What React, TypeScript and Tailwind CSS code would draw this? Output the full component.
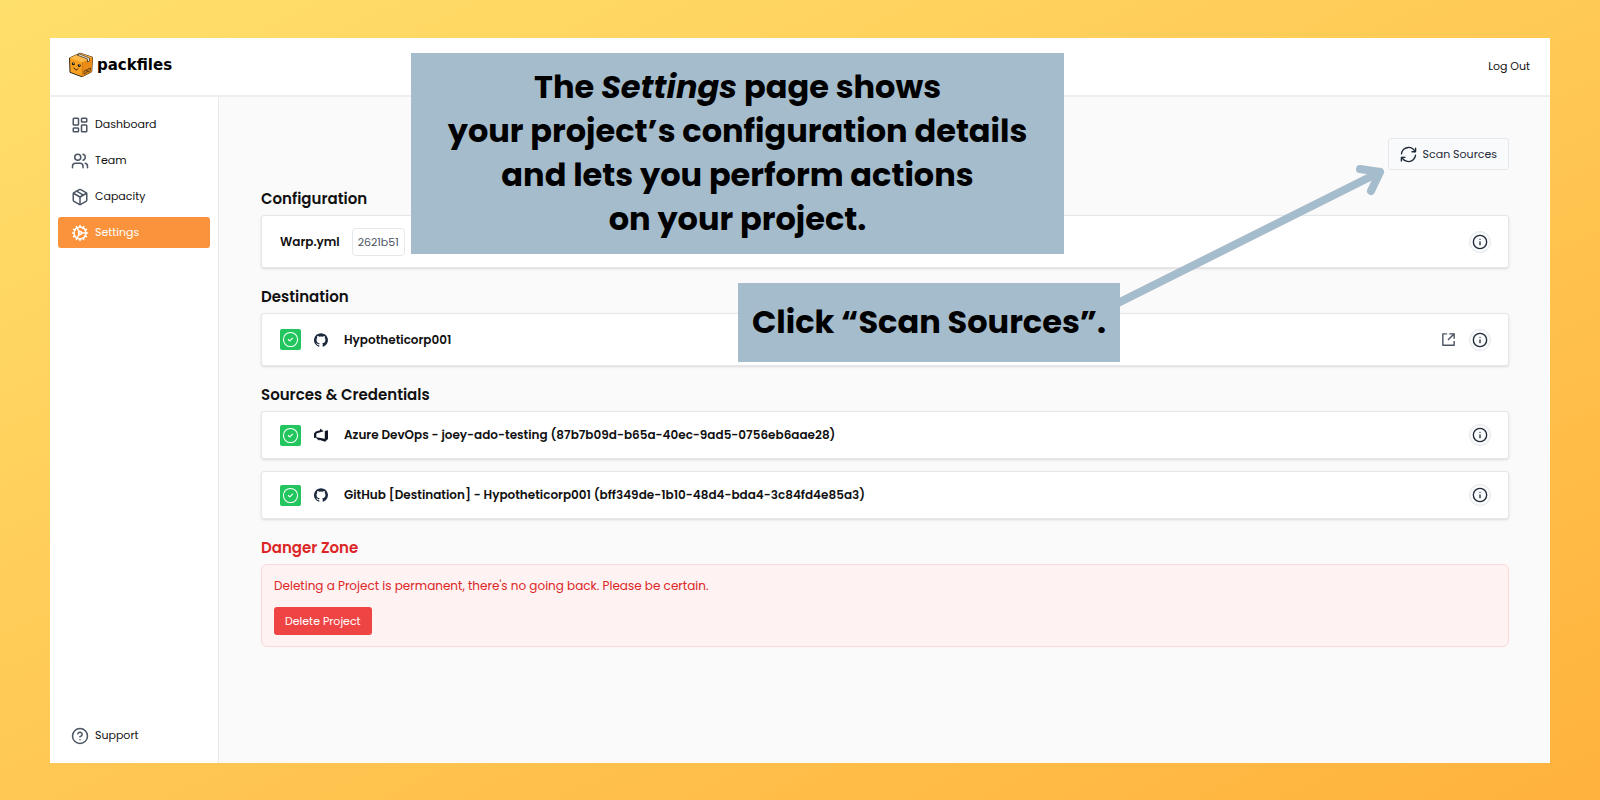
import type { ReactNode } from "react";
import { Info, LayoutDashboard, Users, Package, Cog, CircleHelp, CircleCheck } from "lucide-react";
import { RiShareBoxLine } from "react-icons/ri";

function BoxLogo() {
  return (
    <svg viewBox="0 0 26 26" className="size-[26px]" aria-hidden="true">
      <path d="M1.500 6 12 1.200l12.500 4-.8 14.600L14 24.800 2 20.300z" fill="#f8a01f" stroke="#3a2a18" strokeWidth="1" strokeLinejoin="round" />
      <path d="M1.500 6 12 1.200l12.500 4-10 5z" fill="#fdb94a" />
      <path d="m14.500 10.200 10-5-.8 14.600-9.700 5z" fill="#ea8c16" />
      <path d="m14.500 10.200-.5 14.600" stroke="#b86a10" strokeWidth=".6" />
      <path d="m9 3 10.500 4v3l2-1V6L11.500 2z" fill="#e9e4dc" stroke="#3a2a18" strokeWidth=".7" strokeLinejoin="round" />
      <circle cx="5.300" cy="11.800" r="1.500" fill="#1c1410" />
      <circle cx="11.200" cy="13.600" r="1.500" fill="#1c1410" />
      <circle cx="5.700" cy="11.300" r=".5" fill="#fff" />
      <circle cx="11.600" cy="13.100" r=".5" fill="#fff" />
      <path d="M6 16c.5 2 3 2.600 3.800.9" fill="none" stroke="#1c1410" strokeWidth="1" strokeLinecap="round" />
      <path d="m16 19 2.600-1.300v3L16 22zM19.800 17.200l2.500-1.200v2.800l-2.500 1.300z" fill="none" stroke="#3a2a18" strokeWidth=".7" />
    </svg>
  );
}

function GithubMark() {
  return (
    <svg viewBox="0 0 24 24" className="size-[14px] text-slate-800" fill="currentColor" aria-hidden="true">
      <path d="M12 .3a12 12 0 0 0-3.800 23.380c.6.120.830-.26.830-.570L9 21.070c-3.340.720-4.040-1.610-4.040-1.610-.550-1.390-1.340-1.760-1.340-1.760-1.080-.740.090-.730.090-.730 1.200.090 1.830 1.240 1.830 1.240 1.080 1.830 2.810 1.300 3.500 1 .1-.780.420-1.310.760-1.610-2.670-.3-5.470-1.330-5.470-5.930 0-1.310.470-2.380 1.240-3.220-.140-.3-.540-1.520.1-3.180 0 0 1.010-.320 3.300 1.230a11.500 11.500 0 0 1 6 0c2.280-1.550 3.290-1.230 3.290-1.230.640 1.660.240 2.880.120 3.180a4.650 4.650 0 0 1 1.230 3.220c0 4.610-2.800 5.630-5.480 5.920.420.360.810 1.100.810 2.220l-.010 3.290c0 .310.2.690.820.570A12 12 0 0 0 12 .3" />
    </svg>
  );
}

function AzureDevOpsMark() {
  return (
    <svg viewBox="0 0 24 24" className="size-[14px] text-gray-900" fill="currentColor" aria-hidden="true">
      <path d="M0 9.500 3 6l7.500-2V1l6 4.500L4 9.500v6.700L0 17z" />
      <path d="M24 4v15l-5 4.500-10-3.500v2L1.500 15.500l17 3V5z" />
    </svg>
  );
}

function RefreshIcon() {
  return (
    <svg viewBox="0 0 24 24" className="size-[17px]" fill="none" stroke="currentColor" strokeWidth="2" strokeLinecap="round" strokeLinejoin="round" aria-hidden="true">
      <path d="M21.200 8A10 10 0 0 0 12 2C6.800 2 2.500 6 2.100 11" />
      <path d="M17 8h4.400a.6.6 0 0 0 .6-.6V3" />
      <path d="M2.900 16A10 10 0 0 0 12 22c5.200 0 9.400-4 9.900-9" />
      <path d="M7 16H2.600a.6.6 0 0 0-.6.6V21" />
    </svg>
  );
}

function NavItem({ icon, label, active = false }: { icon: ReactNode; label: string; active?: boolean }) {
  return (
    <a
      href="#"
      aria-current={active ? "page" : undefined}
      className={
        active
          ? "flex h-[31px] items-center gap-[6px] rounded-[3px] bg-[#fb923c] pl-[13px] text-[11px] text-white"
          : "flex h-[31px] items-center gap-[6px] rounded-[3px] pl-[13px] text-[11px] text-[#111111]"
      }
    >
      <span className={active ? "text-white" : "text-[#4b5563]"}>{icon}</span>
      {label}
    </a>
  );
}

function InfoButton() {
  return (
    <button type="button" aria-label="Details" className="flex size-[22px] items-center justify-center rounded-full border border-[#e5e7eb] bg-[#f9fafb] text-[#1f2937]">
      <Info className="size-4" />
    </button>
  );
}

function Section({ title, danger = false, children }: { title: string; danger?: boolean; children: ReactNode }) {
  return (
    <section>
      <h2
        className={
          danger
            ? "h-[34px] pt-[6px] text-[15px] leading-6 font-semibold text-[#dc2626]"
            : "h-[34px] pt-[6px] text-[15px] leading-6 font-semibold text-[#111111]"
        }
      >
        {title}
      </h2>
      {children}
    </section>
  );
}

function Card({ tall = false, children }: { tall?: boolean; children: ReactNode }) {
  return (
    <div
      className={
        tall
          ? "flex h-[53px] items-center rounded-[3px] border border-[#e5e7eb] bg-white pr-[17px] pl-[18px] shadow-sm"
          : "flex h-12 items-center rounded-[3px] border border-[#e5e7eb] bg-white pr-[17px] pl-[18px] shadow-sm"
      }
    >
      {children}
    </div>
  );
}

function Connection({ icon, name }: { icon: ReactNode; name: string }) {
  return (
    <>
      <span className="flex size-[21px] items-center justify-center rounded-[2px] bg-[#22c55e] text-white">
        <CircleCheck className="size-[17px]" strokeWidth={1.5} />
      </span>
      <span className="ml-[13px] w-[14px]">{icon}</span>
      <h3 className="ml-4 text-xs font-semibold text-[#111111]">{name}</h3>
    </>
  );
}

export default function App() {
  return (
    <div className="flex min-h-screen bg-[linear-gradient(155deg,#ffdf6b,#ffb23d)] px-[50px] pt-[38px] pb-[37px] font-['Poppins','Inter',sans-serif]">
      <div className="relative flex flex-1 flex-col bg-white">
        <header className="flex h-[59px] items-center justify-between border-b-2 border-[#eceef0] pr-5 pl-[18px]">
          <a href="#" className="flex items-center gap-[3px] pb-1 font-['DejaVu_Sans',sans-serif] text-[15px] leading-6 font-bold text-black">
            <BoxLogo />
            packfiles
          </a>
          <a href="#" className="text-[11px] text-[#111111]">Log Out</a>
        </header>

        <div className="flex flex-1">
          <nav className="flex w-[169px] flex-col justify-between border-r border-[#e5e7eb] px-2 pt-3 pb-3">
            <div className="flex flex-col gap-[5px]">
              <NavItem icon={<LayoutDashboard className="size-[18px]" />} label="Dashboard" />
              <NavItem icon={<Users className="size-[18px]" />} label="Team" />
              <NavItem icon={<Package className="size-[18px]" />} label="Capacity" />
              <NavItem icon={<Cog className="size-[18px]" />} label="Settings" active />
            </div>
            <NavItem icon={<CircleHelp className="size-[18px]" />} label="Support" />
          </nav>

          <main className="flex-1 bg-[#fafafa] pt-[41px] pr-[41px] pl-[42px]">
            <div className="flex justify-end">
              <button type="button" className="flex h-8 items-center gap-[6px] rounded-[3px] border border-[#e5e7eb] bg-[#f9fafb] px-[11px] text-[11px] text-[#1f2937]">
                <RefreshIcon />
                Scan Sources
              </button>
            </div>

            <div className="mt-[11px] flex flex-col gap-[11px]">
              <Section title="Configuration">
                <Card tall>
                  <h3 className="text-xs font-semibold text-[#111111]">Warp.yml</h3>
                  <code className="ml-3 rounded border border-[#e5e7eb] px-[5px] py-[5px] font-['Poppins','Inter',sans-serif] text-[11px] leading-4 text-[#4b5563]">2621b51</code>
                  <span className="ml-auto"><InfoButton /></span>
                </Card>
              </Section>

              <Section title="Destination">
                <Card tall>
                  <Connection icon={<GithubMark />} name="Hypotheticorp001" />
                  <a href="#" aria-label="Open" className="mr-3 ml-auto text-[#4b5563]"><RiShareBoxLine className="size-[17px]" /></a>
                  <InfoButton />
                </Card>
              </Section>

              <Section title="Sources &amp; Credentials">
                <div className="flex flex-col gap-3">
                  <Card>
                    <Connection icon={<AzureDevOpsMark />} name="Azure DevOps - joey-ado-testing (87b7b09d-b65a-40ec-9ad5-0756eb6aae28)" />
                    <span className="ml-auto"><InfoButton /></span>
                  </Card>
                  <Card>
                    <Connection icon={<GithubMark />} name="GitHub [Destination] - Hypotheticorp001 (bff349de-1b10-48d4-bda4-3c84fd4e85a3)" />
                    <span className="ml-auto"><InfoButton /></span>
                  </Card>
                </div>
              </Section>

              <Section title="Danger Zone" danger>
                <div className="rounded-md border border-[#fcd9d9] bg-[#fef2f2] px-3 py-[11px]">
                  <p className="text-xs leading-5 text-[#dc2626]">Deleting a Project is permanent, there's no going back. Please be certain.</p>
                  <button type="button" className="mt-[11px] h-7 rounded-[3px] bg-[#ef4444] px-[11px] text-[11px] text-white">Delete Project</button>
                </div>
              </Section>
            </div>
          </main>
        </div>

        <svg viewBox="0 0 290 150" className="absolute top-[122px] left-[1058px] h-[150px] w-[290px]" fill="none" stroke="#a5bccc" strokeWidth="8" strokeLinecap="round" strokeLinejoin="round" aria-hidden="true">
          <path d="M0 148 272 12M252 9l20 3-9 19" />
        </svg>
        <p className="absolute top-[15px] left-[361px] flex w-[653px] flex-col bg-[#a5bccc] pt-3 pb-[13px] text-center text-[32px] leading-[44px] font-bold text-black">
          <span>The <em>Settings</em> page shows</span>
          <span>your project’s configuration details</span>
          <span>and lets you perform actions</span>
          <span>on your project.</span>
        </p>
        <p className="absolute top-[245px] left-[688px] flex h-[79px] w-[382px] items-center justify-center bg-[#a5bccc] pb-[2px] text-[32px] leading-[44px] font-bold text-black">
          Click “Scan Sources”.
        </p>
      </div>
    </div>
  );
}
